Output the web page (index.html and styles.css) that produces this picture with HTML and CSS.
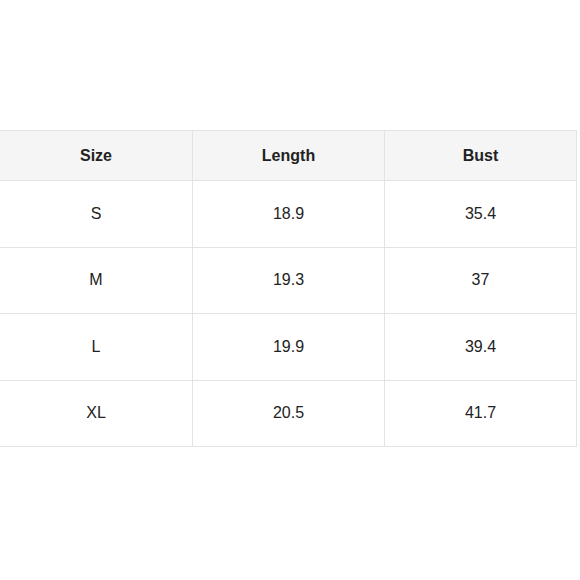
FILE: index.html
```html
<!DOCTYPE html>
<html>
<head>
<meta charset="utf-8">
<link rel="stylesheet" href="styles.css">
</head>
<body>
<div class="page">
<table class="size-table">
<thead>
<tr><th>Size</th><th>Length</th><th>Bust</th></tr>
</thead>
<tbody>
<tr><td>S</td><td>18.9</td><td>35.4</td></tr>
<tr><td>M</td><td>19.3</td><td>37</td></tr>
<tr><td>L</td><td>19.9</td><td>39.4</td></tr>
<tr><td>XL</td><td>20.5</td><td>41.7</td></tr>
</tbody>
</table>
</div>
</body>
</html>
```
FILE: styles.css
```css
html, body {
  margin: 0;
  padding: 0;
  background: #ffffff;
}
.page {
  width: 580px;
  height: 580px;
  overflow: hidden;
  padding-top: 130px;
  box-sizing: border-box;
}
.size-table {
  border-collapse: collapse;
  margin-left: -1px;
  table-layout: fixed;
  width: 578px;
  font-family: "Liberation Sans", Arial, sans-serif;
  font-size: 16px;
  color: #222222;
}
.size-table th,
.size-table td {
  border: 1px solid #e3e3e3;
  text-align: center;
  padding: 0;
}
.size-table th:first-child,
.size-table td:first-child {
  width: 192px;
}
.size-table th {
  background: #f5f5f5;
  font-weight: bold;
  height: 49px;
}
.size-table td {
  height: 65.5px;
}
```
